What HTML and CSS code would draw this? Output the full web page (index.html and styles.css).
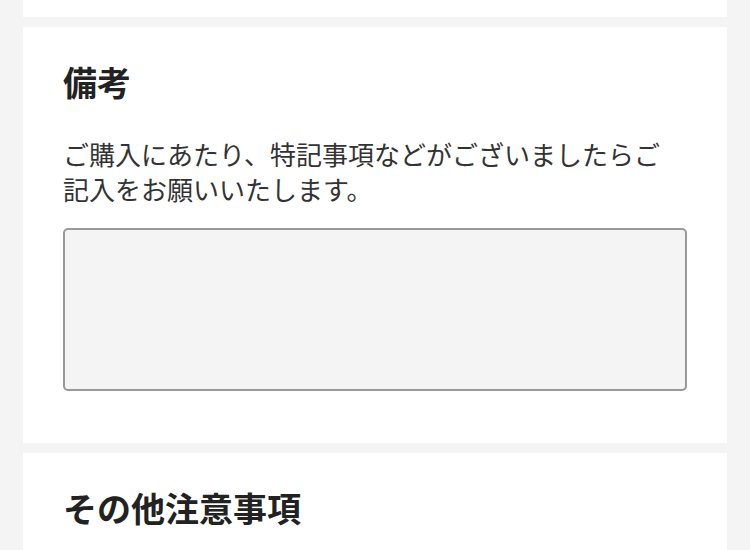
FILE: index.html
```html
<!DOCTYPE html>
<html lang="ja">
<head>
<meta charset="utf-8">
<link rel="stylesheet" href="styles.css">
</head>
<body>
<div class="page">
  <section class="card card-prev"></section>
  <section class="card">
    <h2 class="card-title">備考</h2>
    <p class="card-text">ご購入にあたり、特記事項などがございましたらご記入をお願いいたします。</p>
    <textarea class="note-input"></textarea>
  </section>
  <section class="card">
    <h2 class="card-title">その他注意事項</h2>
  </section>
</div>
</body>
</html>
```
FILE: styles.css
```css
html, body {
  margin: 0;
  padding: 0;
  background: #f4f4f4;
}
body {
  font-family: "Noto Sans CJK JP", "Noto Sans", sans-serif;
  color: #333;
}
.page {
  display: flex;
  flex-direction: column;
  gap: 10px;
  padding: 0 23px;
}
.card {
  background: #fff;
  padding: 35px 40px 40px;
}
.card-prev {
  height: 17px;
  padding: 0;
}
.card-title {
  margin: 0;
  font-size: 34px;
  line-height: 40px;
  font-weight: 700;
  color: #222;
}
.card-text {
  margin: 34px 0 0;
  padding-right: 2px;
  font-size: 26px;
  line-height: 35px;
  color: #333;
}
.note-input {
  display: block;
  box-sizing: border-box;
  width: 100%;
  height: 163px;
  margin: 22px 0 12px;
  border: 2px solid #999;
  border-radius: 5px;
  background: #f4f4f4;
  resize: none;
  font: inherit;
}
```
